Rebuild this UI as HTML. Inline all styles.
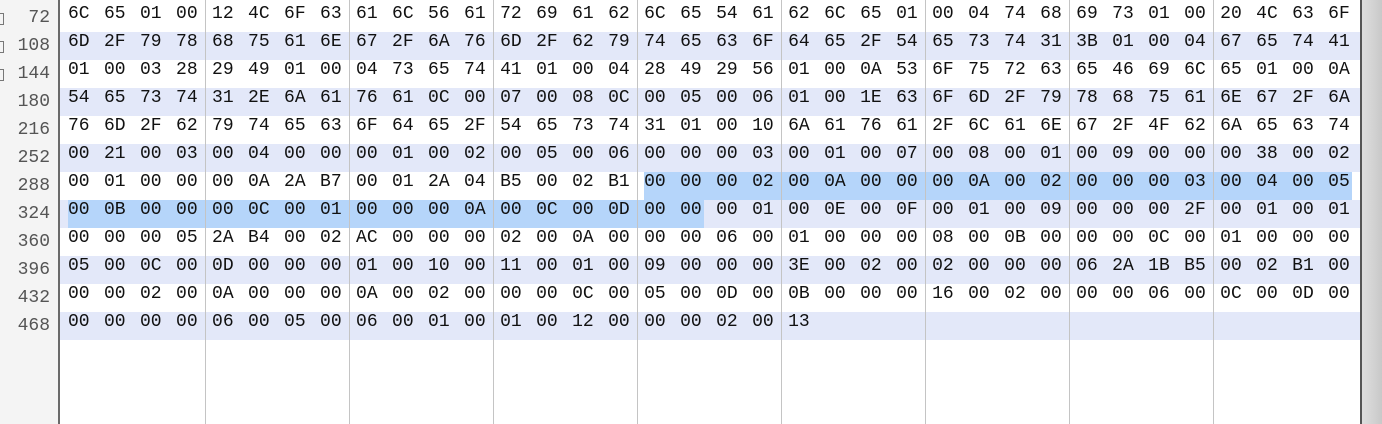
<!DOCTYPE html>
<html><head><meta charset="utf-8"><style>
html,body{margin:0;padding:0;width:1382px;height:424px;overflow:hidden;background:#fff;position:relative}
.g{position:absolute;left:0;top:0;width:58px;height:424px;background:#f4f4f4;border-right:2px solid #6a6a6a}
.ln{position:absolute;left:0;width:50px;text-align:right;font:18px "Liberation Mono",monospace;color:#555;height:28px;line-height:28px}
.band{position:absolute;left:60px;width:1300px;height:28px;background:#e3e8f9}
.sel{position:absolute;height:28px;background:#b5d5fa}
.vl{position:absolute;top:0;width:1px;height:424px;background:#c4c4c4}
.row{position:absolute;left:68px;height:28px;line-height:28px;font:18px "Liberation Mono",monospace;color:#111;white-space:pre;word-spacing:3.6px}
.sb{position:absolute;left:1360px;top:0;width:22px;height:424px;background:linear-gradient(90deg,#555 0,#555 2px,#ddd 2px,#d4d4d4 12px,#c8c8c8 22px)}
.cb{position:absolute;left:0;width:3px;height:10px;border:1px solid #777;border-left:none}
</style></head><body>
<div class="g"></div>
<div class="band" style="top:32px"></div>
<div class="band" style="top:88px"></div>
<div class="band" style="top:144px"></div>
<div class="band" style="top:200px"></div>
<div class="band" style="top:256px"></div>
<div class="band" style="top:312px"></div>
<div class="sel" style="top:172px;left:644px;width:708px"></div>
<div class="sel" style="top:200px;left:68px;width:636px"></div>
<div class="vl" style="left:205px"></div><div class="vl" style="left:349px"></div><div class="vl" style="left:493px"></div><div class="vl" style="left:637px"></div><div class="vl" style="left:781px"></div><div class="vl" style="left:925px"></div><div class="vl" style="left:1069px"></div><div class="vl" style="left:1213px"></div>
<div class="cb" style="top:13px"></div><div class="cb" style="top:41px"></div><div class="cb" style="top:69px"></div>
<div class="ln" style="top:4px">72</div>
<div class="ln" style="top:32px">108</div>
<div class="ln" style="top:60px">144</div>
<div class="ln" style="top:88px">180</div>
<div class="ln" style="top:116px">216</div>
<div class="ln" style="top:144px">252</div>
<div class="ln" style="top:172px">288</div>
<div class="ln" style="top:200px">324</div>
<div class="ln" style="top:228px">360</div>
<div class="ln" style="top:256px">396</div>
<div class="ln" style="top:284px">432</div>
<div class="ln" style="top:312px">468</div>
<div class="row" style="top:4px">6C 65 01 00 12 4C 6F 63 61 6C 56 61 72 69 61 62 6C 65 54 61 62 6C 65 01 00 04 74 68 69 73 01 00 20 4C 63 6F</div>
<div class="row" style="top:32px">6D 2F 79 78 68 75 61 6E 67 2F 6A 76 6D 2F 62 79 74 65 63 6F 64 65 2F 54 65 73 74 31 3B 01 00 04 67 65 74 41</div>
<div class="row" style="top:60px">01 00 03 28 29 49 01 00 04 73 65 74 41 01 00 04 28 49 29 56 01 00 0A 53 6F 75 72 63 65 46 69 6C 65 01 00 0A</div>
<div class="row" style="top:88px">54 65 73 74 31 2E 6A 61 76 61 0C 00 07 00 08 0C 00 05 00 06 01 00 1E 63 6F 6D 2F 79 78 68 75 61 6E 67 2F 6A</div>
<div class="row" style="top:116px">76 6D 2F 62 79 74 65 63 6F 64 65 2F 54 65 73 74 31 01 00 10 6A 61 76 61 2F 6C 61 6E 67 2F 4F 62 6A 65 63 74</div>
<div class="row" style="top:144px">00 21 00 03 00 04 00 00 00 01 00 02 00 05 00 06 00 00 00 03 00 01 00 07 00 08 00 01 00 09 00 00 00 38 00 02</div>
<div class="row" style="top:172px">00 01 00 00 00 0A 2A B7 00 01 2A 04 B5 00 02 B1 00 00 00 02 00 0A 00 00 00 0A 00 02 00 00 00 03 00 04 00 05</div>
<div class="row" style="top:200px">00 0B 00 00 00 0C 00 01 00 00 00 0A 00 0C 00 0D 00 00 00 01 00 0E 00 0F 00 01 00 09 00 00 00 2F 00 01 00 01</div>
<div class="row" style="top:228px">00 00 00 05 2A B4 00 02 AC 00 00 00 02 00 0A 00 00 00 06 00 01 00 00 00 08 00 0B 00 00 00 0C 00 01 00 00 00</div>
<div class="row" style="top:256px">05 00 0C 00 0D 00 00 00 01 00 10 00 11 00 01 00 09 00 00 00 3E 00 02 00 02 00 00 00 06 2A 1B B5 00 02 B1 00</div>
<div class="row" style="top:284px">00 00 02 00 0A 00 00 00 0A 00 02 00 00 00 0C 00 05 00 0D 00 0B 00 00 00 16 00 02 00 00 00 06 00 0C 00 0D 00</div>
<div class="row" style="top:312px">00 00 00 00 06 00 05 00 06 00 01 00 01 00 12 00 00 00 02 00 13</div>
<div class="sb"></div>
</body></html>
